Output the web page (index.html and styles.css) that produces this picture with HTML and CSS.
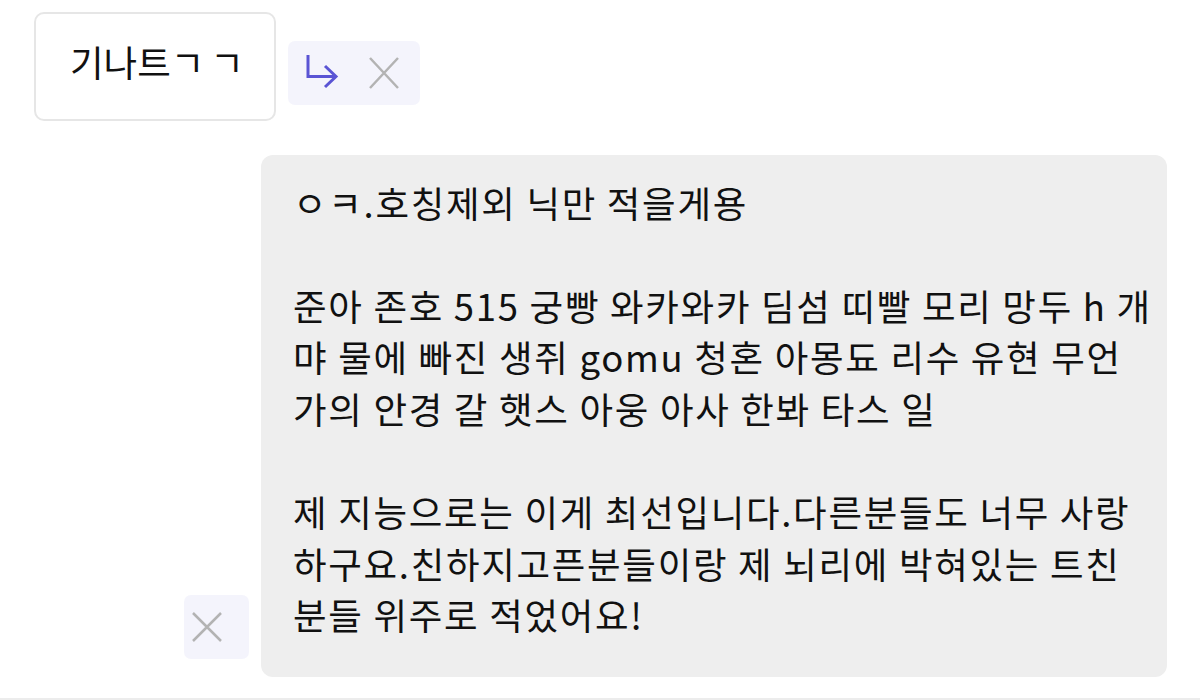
FILE: index.html
```html
<!DOCTYPE html>
<html>
<head>
    <title>Chat</title>
    <link rel="stylesheet" href="styles.css">
</head>
<body>
    <div class="chat">
        <div class="row row-left">
            <div class="bubble bubble-plain">기나트<span class="jamo">ㄱㄱ</span></div>
            <div class="actions">
                <button class="icon-btn" title="Reply">
                    <svg width="34" height="38" viewBox="0 0 34 38">
                        <path d="M2 1 V22.5 H30" fill="none" stroke="#5a54d4" stroke-width="3"/>
                        <path d="M19 12 L30 22.5 L19 33" fill="none" stroke="#5a54d4" stroke-width="3"/>
                    </svg>
                </button>
                <button class="icon-btn" title="Close">
                    <svg width="32" height="34" viewBox="0 0 32 34">
                        <path d="M2 2 L30 32 M30 2 L2 32" fill="none" stroke="#b3b3b3" stroke-width="2.5"/>
                    </svg>
                </button>
            </div>
        </div>

        <div class="row row-right">
            <div class="actions actions-bottom">
                <button class="icon-btn" title="Close">
                    <svg width="32" height="32" viewBox="0 0 32 32">
                        <path d="M2 2 L30 30 M30 2 L2 30" fill="none" stroke="#b3b3b3" stroke-width="2.5"/>
                    </svg>
                </button>
            </div>
            <div class="bubble bubble-gray">
                <p>ㅇㅋ.호칭제외 닉만 적을게용</p>
                <p>준아 존호 515 궁빵 와카와카 딤섬 띠빨 모리 망두 h 개<br>먀 물에 빠진 생쥐 gomu 청혼 아몽됴 리수 유현 무언<br>가의 안경 갈 햇스 아웅 아사 한봐 타스 일</p>
                <p>제 지능으로는 이게 최선입니다.다른분들도 너무 사랑<br>하구요.친하지고픈분들이랑 제 뇌리에 박혀있는 트친<br>분들 위주로 적었어요!</p>
            </div>
        </div>
    </div>
    <div class="footer-line"></div>
</body>
</html>
```

FILE: styles.css
```css
html, body { margin: 0; padding: 0; background: #fff; }
body { font-family: "Noto Sans CJK KR", "Noto Sans", sans-serif; color: #111; width: 1200px; height: 700px; overflow: hidden; display: flex; flex-direction: column; }
.chat { flex: 1; padding: 12px 33px 0 34px; display: flex; flex-direction: column; gap: 34px; }
.row { display: flex; gap: 12px; }
.row-left { align-items: flex-start; }
.row-right { justify-content: flex-end; align-items: flex-end; }

.bubble { font-size: 36.5px; line-height: 51.6px; white-space: nowrap; }
.bubble-plain { border: 2px solid #e6e6e6; border-radius: 10px; padding: 22px 24px 31px 34px; }
.bubble-plain .jamo { letter-spacing: 0.16em; }
.bubble-gray { background: #eeeeee; border-radius: 12px; width: 906px; box-sizing: border-box; padding: 22px 20px 36px 32px; letter-spacing: 1.7px; }
.bubble-gray p { margin: 0; }
.bubble-gray p + p { margin-top: 51.6px; }

.actions { display: flex; align-items: center; gap: 0; background: #f4f4fc; border-radius: 7px; margin-top: 29px; padding: 0 10px 0 18px; height: 64px; }
.actions-bottom { margin: 0 0 18px 0; padding: 0; width: 65px; justify-content: center; }
.icon-btn { background: none; border: none; padding: 0; margin: 0; display: flex; align-items: center; justify-content: center; width: 52px; height: 64px; cursor: pointer; }
.actions .icon-btn:first-child { justify-content: flex-start; }

.footer-line { height: 2px; background: #ececec; }
```
